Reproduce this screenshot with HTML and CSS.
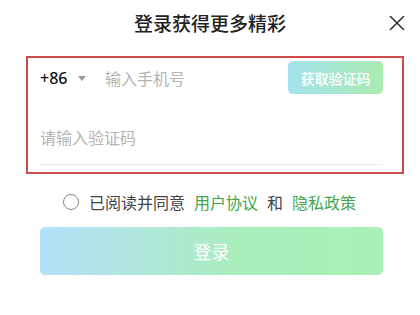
FILE: index.html
```html
<!DOCTYPE html>
<html lang="zh">
<head>
<meta charset="utf-8">
<link rel="stylesheet" href="styles.css">
</head>
<body>
<div class="page">
  <header class="header">
    <h1 class="title">登录获得更多精彩</h1>
    <button class="close" aria-label="关闭">
      <svg width="16" height="16" viewBox="0 0 16 16"><path d="M1.5 1.5 L14.5 14.5 M14.5 1.5 L1.5 14.5" stroke="#333" stroke-width="1.6" fill="none" stroke-linecap="round"/></svg>
    </button>
  </header>
  <div class="form">
    <div class="row-phone">
      <span class="code">+86</span>
      <span class="caret"></span>
      <span class="placeholder phone">输入手机号</span>
      <span class="get-code">获取验证码</span>
    </div>
    <div class="row-sms">
      <span class="placeholder">请输入验证码</span>
    </div>
  </div>
  <div class="agree">
    <span class="radio"></span>
    <span class="agree-text">已阅读并同意</span>
    <span class="link">用户协议</span>
    <span class="agree-text">和</span>
    <span class="link">隐私政策</span>
  </div>
  <button class="login">登录</button>
</div>
</body>
</html>
```
FILE: styles.css
```css
* { box-sizing: border-box; }
html, body { margin: 0; padding: 0; background: #fff; }
body {
  font-family: "Noto Sans CJK SC", "Noto Sans", sans-serif;
  width: 420px;
  height: 315px;
  overflow: hidden;
}
.page { display: flex; flex-direction: column; }
.header {
  position: relative;
  height: 46px;
  display: flex;
  align-items: center;
  justify-content: center;
}
.title {
  margin: 0;
  font-size: 19px;
  font-weight: 500;
  color: #222;
  line-height: 26px;
}
.close {
  position: absolute;
  right: 15px;
  top: 15px;
  border: 0;
  background: none;
  padding: 0;
  width: 16px;
  height: 16px;
  display: flex;
}
.form {
  margin: 10px 16px 0 26px;
  border: 2px solid #cc4a4a;
  height: 118px;
  padding: 3px 19px 0 12px;
}
.row-phone {
  display: flex;
  align-items: center;
  height: 33px;
}
.code {
  font-family: "Noto Sans", sans-serif;
  font-size: 16px;
  font-weight: 500;
  color: #111;
  width: 29px;
}
.caret {
  width: 0; height: 0;
  border-left: 4px solid transparent;
  border-right: 4px solid transparent;
  border-top: 5px solid #999;
  margin-left: 9px;
  margin-top: 1px;
}
.placeholder {
  font-size: 16px;
  color: #b4b4b4;
  line-height: 22px;
}
.phone { margin-left: 19px; flex: 1; }
.get-code {
  width: 95px;
  height: 33px;
  border-radius: 5px;
  background: linear-gradient(90deg, #a4e3ee, #aaebb0);
  color: #fff;
  font-size: 14px;
  font-weight: 500;
  display: flex;
  align-items: center;
  justify-content: center;
}
.row-sms {
  margin-top: 32px;
  padding-bottom: 16px;
  border-bottom: 1px solid #ececec;
  display: flex;
}
.agree {
  display: flex;
  align-items: center;
  margin: 17px 0 0 63px;
  height: 22px;
  font-size: 16px;
  line-height: 22px;
}
.radio {
  width: 16px; height: 16px;
  border: 1.4px solid #888;
  border-radius: 50%;
  margin-right: 10px;
}
.agree-text { color: #444; margin-right: 9px; }
.link { color: #45a64f; margin-right: 9px; }
.login {
  margin: 14px 0 0 40px;
  width: 343px;
  height: 48px;
  border: 0;
  border-radius: 5px;
  background: linear-gradient(90deg, #b2e0f9, #aaeebb 60%, #a9f0b6);
  color: #fff;
  font-family: "Noto Sans CJK SC", sans-serif;
  font-size: 18px;
  padding: 0;
}
```
